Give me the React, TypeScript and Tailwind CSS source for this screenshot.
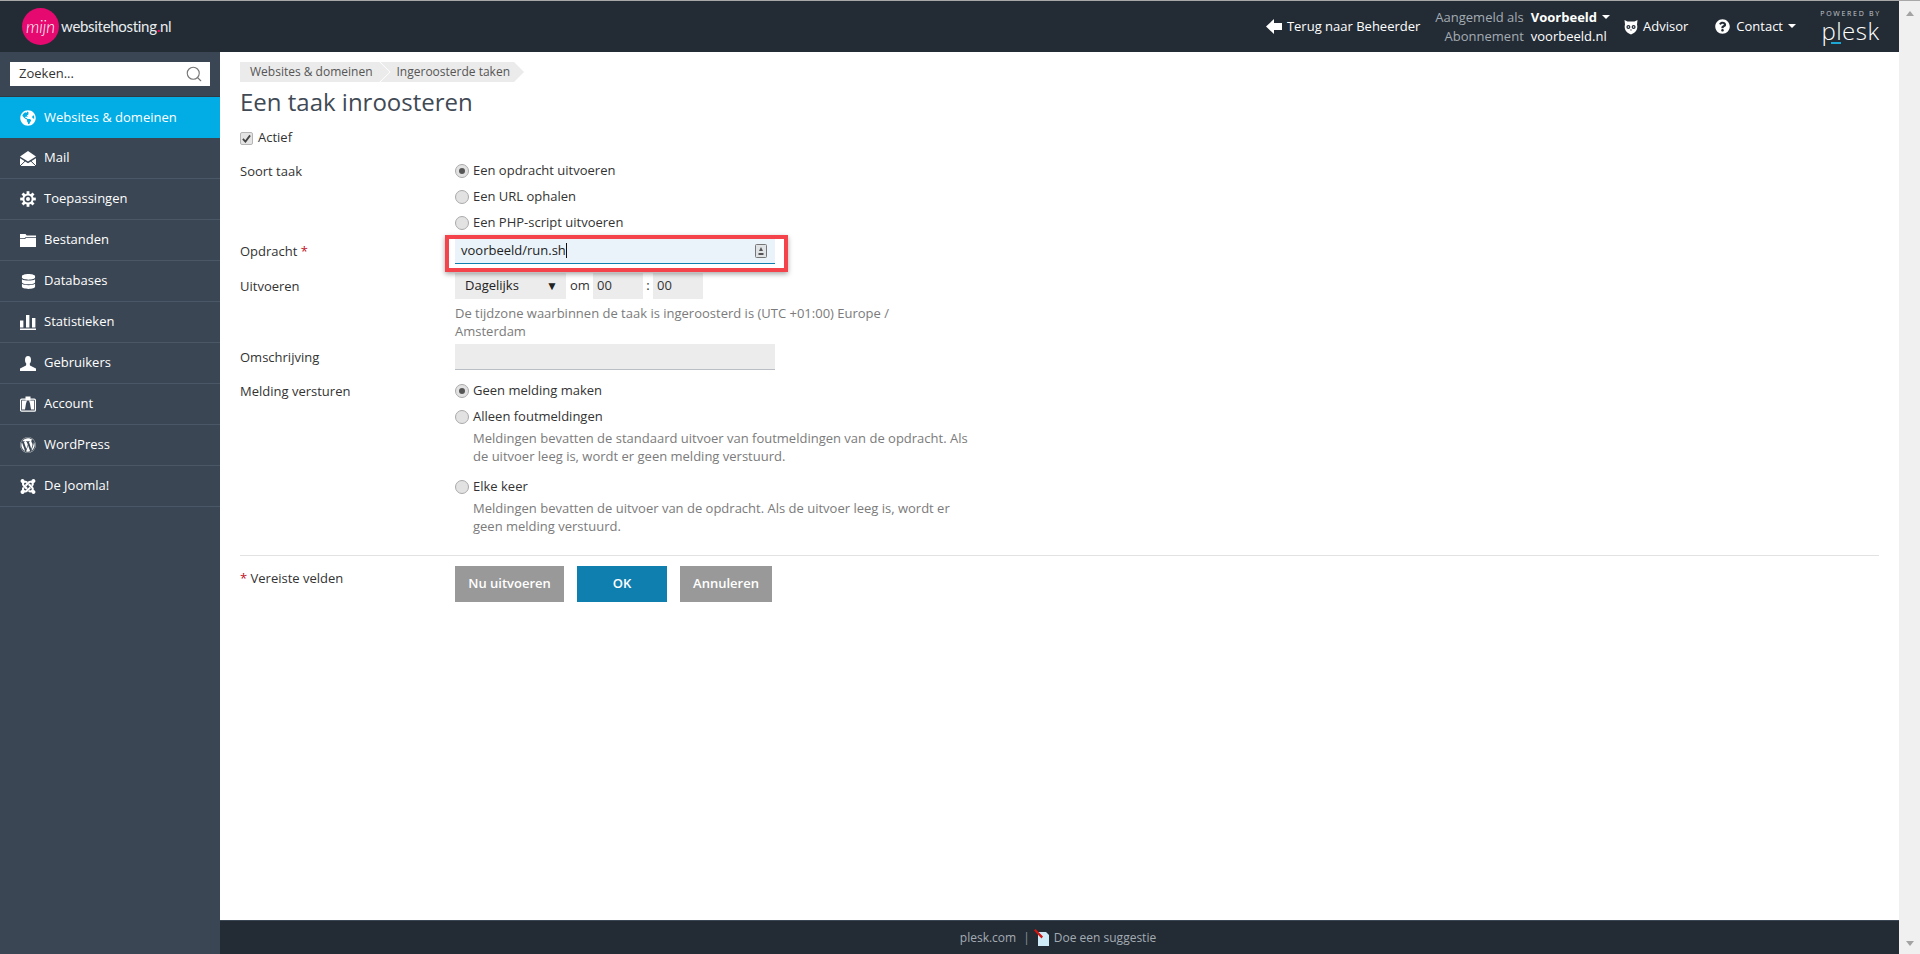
import type { ReactNode } from 'react'
import { Search } from 'lucide-react'
import { FaDatabase, FaGlobeAmericas, FaJoomla, FaQuestionCircle, FaWordpress } from 'react-icons/fa'

function MailIcon() {
  return (
    <svg viewBox="0 0 16 15" className="w-4 h-[15px]">
      <path d="M8 0 16 5.6 8 10.6 0 5.6z" fill="#fff" />
      <path d="M0 7.2 8 12.2l8-5V15H0z" fill="#fff" />
      <path d="M0 15 5.6 9.6M16 15l-5.6-5.4" stroke="#3a4653" strokeWidth="1" fill="none" />
    </svg>
  )
}

function GearIcon() {
  return (
    <svg viewBox="0 0 16 16" className="w-4 h-4">
      {[0, 45, 90, 135].map((a) => (
        <rect key={a} x="6.6" y="0.2" width="2.8" height="15.6" fill="#fff" transform={`rotate(${a} 8 8)`} />
      ))}
      <circle cx="8" cy="8" r="5.6" fill="#fff" />
      <circle cx="8" cy="8" r="3.6" fill="#3a4653" />
      <circle cx="8" cy="8" r="2" fill="#fff" />
    </svg>
  )
}

function FolderIcon() {
  return (
    <svg viewBox="0 0 16 14" className="w-4 h-[14px]">
      <path d="M0 1h5.5l1.2 1.6H16v1.6H5.5L4.5 5.2H0z" fill="#fff" />
      <path d="M0 6h5l1-1h10v9H0z" fill="#fff" />
    </svg>
  )
}

function StatsIcon() {
  return (
    <svg viewBox="0 0 16 15" className="w-4 h-[15px]">
      <rect x="0" y="5.5" width="3.4" height="7" fill="#fff" />
      <rect x="6" y="0" width="3.4" height="12.5" fill="#fff" />
      <rect x="12" y="3" width="3.4" height="9.5" fill="#fff" />
      <rect x="0" y="13.5" width="16" height="1.5" fill="#fff" />
    </svg>
  )
}

function UserIcon() {
  return (
    <svg viewBox="0 0 16 15" className="w-4 h-[15px]">
      <ellipse cx="8" cy="4" rx="3" ry="4" fill="#fff" />
      <path d="M6.4 7h3.2l.4 2.6L16 12.4V15H0v-2.6l6-2.8z" fill="#fff" />
    </svg>
  )
}

function AccountIcon() {
  return (
    <svg viewBox="0 0 16 16" className="w-4 h-4">
      <rect x="0.6" y="3.2" width="14.8" height="12" rx="1" fill="none" stroke="#fff" strokeWidth="1.2" />
      <rect x="5.5" y="0.5" width="5" height="4" fill="#fff" />
      <path d="M2 4.5h5l-1 3-1 6H2zM14 4.5H9l1 3 1 6h3z" fill="#fff" />
    </svg>
  )
}

function OwlIcon() {
  return (
    <svg viewBox="0 0 14 16" className="w-[14px] h-4">
      <path d="M0.5 1 3.5 2.5h7L13.5 1 13 5.5c1 3 0 8-6 10-6-2-7-7-6-10z" fill="#fff" />
      <circle cx="4.4" cy="8" r="2" fill="#232c35" />
      <circle cx="9.6" cy="8" r="2" fill="#232c35" />
      <circle cx="4.4" cy="8" r="0.8" fill="#fff" />
      <circle cx="9.6" cy="8" r="0.8" fill="#fff" />
      <path d="M6.2 10.4h1.6L7 12z" fill="#232c35" />
    </svg>
  )
}

function Caret() {
  return <span className="inline-block ml-[5px] mb-[2px] align-middle border-x-[4px] border-t-[4px] border-x-transparent border-t-white" />
}

function Logo() {
  return (
    <div className="flex items-center ml-[22px]">
      <div className="w-[37px] h-[37px] rounded-full bg-[#e6096f] flex items-center justify-center">
        <span className="font-['Lato',sans-serif] italic text-white text-[17px] font-light leading-none">mijn</span>
      </div>
      <span className="ml-[2px] text-[#e9ecef] text-[15px] tracking-[-0.3px] font-['Lato',sans-serif]">
        websitehosting<span className="text-[#e6096f] font-bold">.</span>nl
      </span>
    </div>
  )
}

function Header() {
  return (
    <header className="h-[51px] shrink-0 bg-[#232c35] flex items-center text-[13px] text-white">
      <Logo />
      <div className="ml-auto flex items-center pr-[19px]">
        <svg viewBox="0 0 16 15" className="w-4 h-[15px] mr-[5px]">
          <path d="M0 7.5 8 0v4h8v7H8v4z" fill="#fff" />
        </svg>
        <span>Terug naar Beheerder</span>
        <div className="ml-[15px] grid grid-cols-[auto_auto] gap-x-[7px] leading-[19px]">
          <span className="text-right text-[#a3abb3]">Aangemeld als</span>
          <span className="font-bold">Voorbeeld<Caret /></span>
          <span className="text-right text-[#a3abb3]">Abonnement</span>
          <span>voorbeeld.nl</span>
        </div>
        <div className="ml-[14px]"><OwlIcon /></div>
        <span className="ml-[5px]">Advisor</span>
        <FaQuestionCircle className="ml-[27px] text-[15px]" />
        <span className="ml-[6px]">Contact<Caret /></span>
        <div className="ml-[25px] w-[59px] flex flex-col items-center">
          <span className="text-[7px] leading-[9px] tracking-[1.7px] text-[#c3c8cd] whitespace-nowrap">POWERED BY</span>
          <span className="relative text-[24px] leading-[26px] font-light tracking-[0.5px] text-white">
            plesk
            <span className="absolute left-[10px] bottom-0 w-[10px] h-[2px] bg-[#1ba8d5]" />
          </span>
        </div>
      </div>
    </header>
  )
}

const navItems: { label: string; icon: ReactNode; active?: boolean }[] = [
  { label: 'Websites & domeinen', icon: <FaGlobeAmericas className="text-base" />, active: true },
  { label: 'Mail', icon: <MailIcon /> },
  { label: 'Toepassingen', icon: <GearIcon /> },
  { label: 'Bestanden', icon: <FolderIcon /> },
  { label: 'Databases', icon: <FaDatabase className="text-[15px]" /> },
  { label: 'Statistieken', icon: <StatsIcon /> },
  { label: 'Gebruikers', icon: <UserIcon /> },
  { label: 'Account', icon: <AccountIcon /> },
  { label: 'WordPress', icon: <FaWordpress className="text-base" /> },
  { label: 'De Joomla!', icon: <FaJoomla className="text-[17px]" /> },
]

function Sidebar() {
  return (
    <aside className="w-[220px] shrink-0 bg-[#3a4653] text-[13px] text-white">
      <div className="px-[10px] pt-[10px] pb-[10px] border-b border-[#2f3a45]">
        <div className="h-6 bg-white flex items-center justify-between pl-[9px] pr-[7px] text-[#333]">
          <span>Zoeken...</span>
          <Search className="w-[18px] h-[18px] text-[#777]" strokeWidth={1.5} />
        </div>
      </div>
      {navItems.map((item) => (
        <div
          key={item.label}
          className={item.active
            ? 'h-[41px] flex items-center bg-[#02ade5] pl-5'
            : 'h-[41px] flex items-center border-b border-[#4a5766] pl-5'}
        >
          <span className="w-4 flex justify-center">{item.icon}</span>
          <span className="ml-[8px]">{item.label}</span>
        </div>
      ))}
    </aside>
  )
}

function Radio({ checked, label, hint }: { checked?: boolean; label: string; hint?: string }) {
  return (
    <div>
      <div className="h-[26px] flex items-center">
        <span className="w-[14px] h-[14px] rounded-full border border-[#aaaaaa] bg-[#e2e2e2] flex items-center justify-center shrink-0">
          {checked && <span className="w-[6px] h-[6px] rounded-full bg-[#555]" />}
        </span>
        <span className="ml-[4px]">{label}</span>
      </div>
      {hint && <p className="pl-[18px] w-[520px] -mt-px pb-[9px] text-[#7b7b7b] leading-[18px]">{hint}</p>}
    </div>
  )
}

function Row({ label, children, className }: { label: ReactNode; children: ReactNode; className?: string }) {
  return (
    <div className={`grid grid-cols-[215px_1fr] ${className ?? ''}`}>
      <div className="leading-[26px]">{label}</div>
      <div>{children}</div>
    </div>
  )
}

function ActionButton({ label, className }: { label: string; className: string }) {
  return (
    <div className={`h-9 flex items-center justify-center text-white font-semibold ${className}`}>{label}</div>
  )
}

function Form() {
  return (
    <div className="text-[13px] text-[#333]">
      <div className="h-[26px] mt-[7px] flex items-center">
        <span className="w-[13px] h-[13px] rounded-[2px] border border-[#b5b5b5] bg-[#e4e4e4] flex items-center justify-center">
          <svg viewBox="0 0 10 10" className="w-[9px] h-[9px]">
            <path d="M1 5.5 3.8 8.5 9 1.5" fill="none" stroke="#444" strokeWidth="2" />
          </svg>
        </span>
        <span className="ml-[5px]">Actief</span>
      </div>

      <Row label="Soort taak" className="mt-[7px]">
        <Radio checked label="Een opdracht uitvoeren" />
        <Radio label="Een URL ophalen" />
        <Radio label="Een PHP-script uitvoeren" />
      </Row>

      <Row label={<>Opdracht <span className="text-[#c0121f]">*</span></>} className="mt-[2px]">
        <div className="relative w-[320px] h-[26px] bg-[#eaf3fa] border-b border-[#0f7fb0] flex items-center pl-[6px]">
          <span className="text-[#222]">voorbeeld/run.sh</span>
          <span className="w-px h-[15px] bg-[#111]" />
          <svg viewBox="0 0 12 14" className="absolute right-[8px] top-[6px] w-3 h-[14px]">
            <rect x="0.5" y="0.5" width="11" height="13" rx="1" fill="#dfe3e6" stroke="#777" />
            <path d="M6 3 8 7H4zM3.5 9h5v2h-5z" fill="#555" />
          </svg>
          <div className="absolute -left-[10px] -right-[13px] -top-[3px] -bottom-[9px] border-4 border-[#f4434a] shadow-[0_2px_5px_rgba(0,0,0,0.35)]" />
        </div>
      </Row>

      <Row label="Uitvoeren" className="mt-[9px]">
        <div className="flex items-center">
          <div className="w-[111px] h-[26px] bg-[#ececec] flex items-center justify-between pl-[10px] pr-[8px] text-[#222]">
            <span>Dagelijks</span>
            <span className="text-[12px]">▼</span>
          </div>
          <span className="ml-[4px] w-[23px]">om</span>
          <div className="w-[50px] h-[26px] bg-[#ececec] pl-1 leading-[24px]">00</div>
          <span className="w-[10px] text-center">:</span>
          <div className="w-[50px] h-[26px] bg-[#ececec] pl-1 leading-[24px]">00</div>
        </div>
        <p className="w-[480px] mt-[5px] text-[#7b7b7b] leading-[18px]">
          De tijdzone waarbinnen de taak is ingeroosterd is (UTC +01:00) Europe / Amsterdam
        </p>
      </Row>

      <Row label="Omschrijving" className="mt-[4px]">
        <div className="w-[320px] h-[26px] bg-[#ececec] border-b border-[#b9bfc5]" />
      </Row>

      <Row label="Melding versturen" className="mt-[8px]">
        <Radio checked label="Geen melding maken" />
        <Radio
          label="Alleen foutmeldingen"
          hint="Meldingen bevatten de standaard uitvoer van foutmeldingen van de opdracht. Als de uitvoer leeg is, wordt er geen melding verstuurd."
        />
        <Radio
          label="Elke keer"
          hint="Meldingen bevatten de uitvoer van de opdracht. Als de uitvoer leeg is, wordt er geen melding verstuurd."
        />
      </Row>

      <div className="border-t border-[#e2e2e2] mt-[11px] pt-[10px] grid grid-cols-[215px_1fr]">
        <div className="leading-[24px]"><span className="text-[#c0121f]">*</span> Vereiste velden</div>
        <div className="flex gap-[13px]">
          <ActionButton label="Nu uitvoeren" className="w-[109px] bg-[#999999]" />
          <ActionButton label="OK" className="w-[90px] bg-[#0f7fb0]" />
          <ActionButton label="Annuleren" className="w-[92px] bg-[#999999]" />
        </div>
      </div>
    </div>
  )
}

function Footer() {
  return (
    <footer className="h-[34px] shrink-0 bg-[#232c35] border-t border-[#3a4653] flex items-center justify-center pr-[3px] text-xs text-[#a3abb3]">
      <span>plesk.com</span>
      <span className="ml-[7px] mr-1 text-[#8a939b]">|</span>
      <svg viewBox="0 0 16 17" className="w-4 h-[17px] mr-1">
        <path d="M4 3h8l3 3v11H4z" fill="#cfeaf7" />
        <path d="M0 1.5 1.5 0l7.5 7.5-1.5 2z" fill="#d4140f" />
      </svg>
      <span>Doe een suggestie</span>
    </footer>
  )
}

function Scrollbar() {
  return (
    <div className="w-[21px] shrink-0 bg-[#f0f0f0] flex flex-col items-center justify-between pt-[10px] pb-[8px]">
      <span className="border-x-[4.5px] border-b-[5px] border-x-transparent border-b-[#a3a3a3]" />
      <span className="border-x-[4.5px] border-t-[5px] border-x-transparent border-t-[#a3a3a3]" />
    </div>
  )
}

export default function App() {
  return (
    <div className="h-[954px] flex flex-col overflow-hidden font-['Open_Sans',sans-serif] bg-white">
      <div className="h-px shrink-0 bg-[#a8a8a8]" />
      <div className="flex-1 flex min-h-0">
        <div className="flex-1 flex flex-col min-w-0">
          <Header />
          <div className="flex-1 flex min-h-0">
            <Sidebar />
            <div className="flex-1 flex flex-col min-w-0">
              <main className="flex-1 px-5 pt-[10px]">
                <nav className="flex h-5 text-xs text-[#555]">
                  <span className="flex items-center bg-[#ebebeb] pl-[10px] pr-[17px] [clip-path:polygon(0_0,calc(100%-10px)_0,100%_50%,calc(100%-10px)_100%,0_100%)]">
                    Websites &amp; domeinen
                  </span>
                  <span className="-ml-[9px] flex items-center bg-[#ebebeb] pl-[16px] pr-[14px] [clip-path:polygon(0_0,calc(100%-10px)_0,100%_50%,calc(100%-10px)_100%,0_100%,10px_50%)]">
                    Ingeroosterde taken
                  </span>
                </nav>
                <h1 className="text-2xl leading-[32px] mt-[4px] text-[#3f4a55]">Een taak inroosteren</h1>
                <Form />
              </main>
              <Footer />
            </div>
          </div>
        </div>
        <Scrollbar />
      </div>
    </div>
  )
}
